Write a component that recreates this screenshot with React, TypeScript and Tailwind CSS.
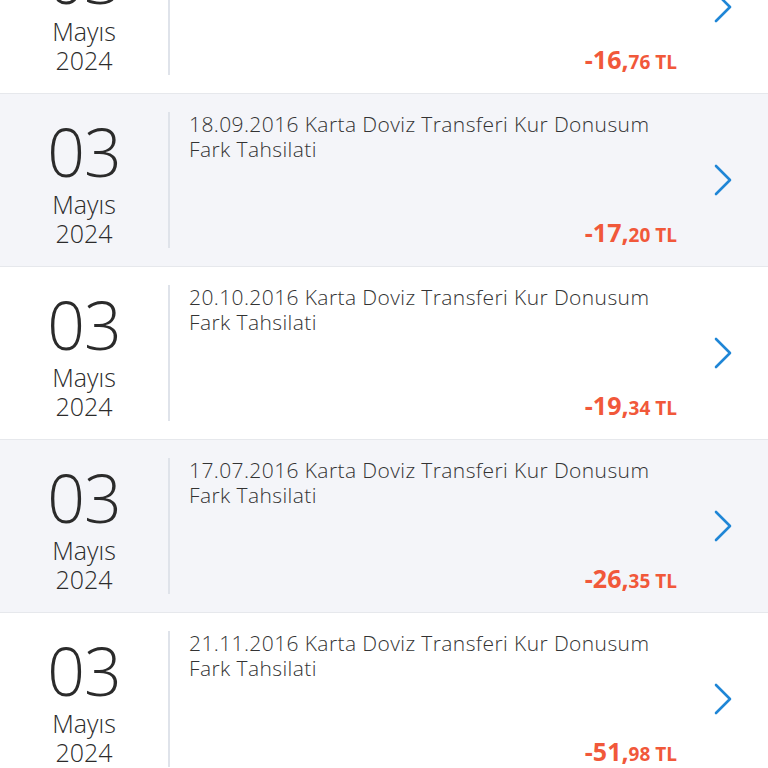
const rows = [
  { desc: '', whole: '-16', frac: '76' },
  { desc: '18.09.2016 Karta Doviz Transferi Kur Donusum Fark Tahsilati', whole: '-17', frac: '20' },
  { desc: '20.10.2016 Karta Doviz Transferi Kur Donusum Fark Tahsilati', whole: '-19', frac: '34' },
  { desc: '17.07.2016 Karta Doviz Transferi Kur Donusum Fark Tahsilati', whole: '-26', frac: '35' },
  { desc: '21.11.2016 Karta Doviz Transferi Kur Donusum Fark Tahsilati', whole: '-51', frac: '98' },
];

const Chevron = () => (
  <svg width="20" height="32" viewBox="0 0 20 32" fill="none">
    <path d="M3 2 L17 16 L3 30" stroke="#1f86d6" strokeWidth="2.6" strokeLinecap="round" strokeLinejoin="round" />
  </svg>
);

export default function App() {
  return (
    <div
      className="h-[768px] w-[768px] overflow-hidden bg-white"
      style={{ fontFamily: '"Open Sans", "Noto Sans", sans-serif' }}
    >
      <div className="mt-[-79px]">
        {rows.map((r, i) => (
          <div
            key={i}
            className={`flex h-[173px] border-b border-[#e6e8ec] ${i % 2 === 1 ? 'bg-[#f4f5f9]' : 'bg-white'}`}
          >
            <div className="flex w-[168px] flex-col items-center pt-[22px] text-[#2b2b2b]">
              <div className="text-[66px] font-light leading-[70px] tracking-[-1px]">03</div>
              <div className="mt-[4px] text-[25px] font-light leading-[29px]">Mayıs</div>
              <div className="text-[25px] font-light leading-[29px]">2024</div>
            </div>
            <div className="my-[18px] w-[2px] bg-[#dfe3ea]" />
            <div className="flex flex-1 flex-col justify-between pl-[19px] pt-[18px] pb-[18px]">
              <div className="max-w-[480px] text-[21px] font-light leading-[25px] tracking-[0.4px] text-[#333]">
                {r.desc}
              </div>
              <div className="text-right font-bold leading-[24px] text-[#f1583a]">
                <span className="text-[25px]">{r.whole},</span>
                <span className="text-[19px]">{r.frac} TL</span>
              </div>
            </div>
            <div className="flex w-[91px] items-center justify-center">
              <Chevron />
            </div>
          </div>
        ))}
      </div>
    </div>
  );
}
